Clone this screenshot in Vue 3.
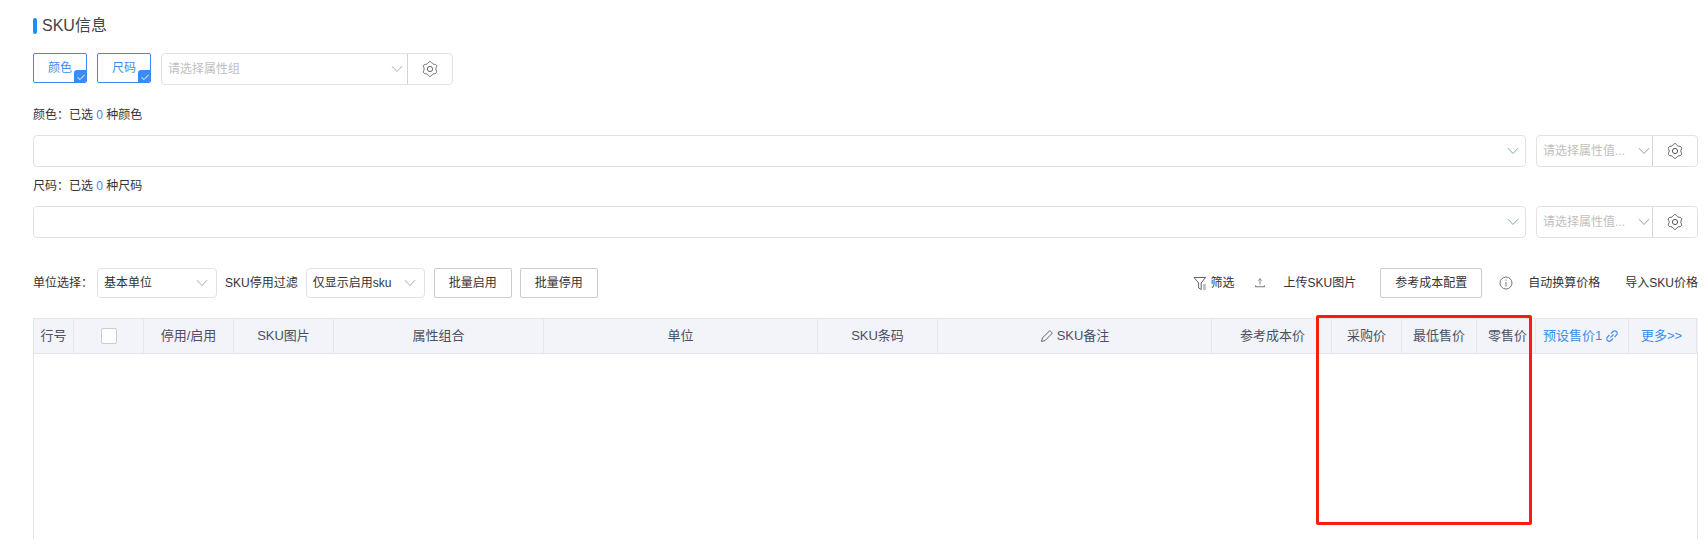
<script setup>
const cols = [
  { t: '行号', w: 40 },
  { t: '', w: 70, check: true },
  { t: '停用/启用', w: 90 },
  { t: 'SKU图片', w: 100 },
  { t: '属性组合', w: 210 },
  { t: '单位', w: 274 },
  { t: 'SKU条码', w: 120 },
  { t: 'SKU备注', w: 274, pen: true },
  { t: '参考成本价', w: 120, cls: 'r27' },
  { t: '采购价', w: 70, cls: 'r15' },
  { t: '最低售价', w: 75, cls: 'r11' },
  { t: '零售价', w: 59, cls: 'r6' },
  { t: '预设售价1', w: 93, cls: 'link pad2', chain: true },
  { t: '更多>>', w: 68, cls: 'link pad2' },
]
const gridCols = cols.map(c => c.w + 'px').join(' ')

function gearPath() {
  const pts = []
  for (let i = 0; i < 72; i++) {
    const a = (i / 72) * Math.PI * 2
    const r = 6.6 - 0.8 * Math.cos(6 * a)
    pts.push((8 + r * Math.cos(a)).toFixed(2) + ' ' + (8 + r * Math.sin(a)).toFixed(2))
  }
  return 'M' + pts.join('L') + 'Z'
}
const gear = gearPath()
const attrRows = [
  { label: '颜色', unit: '种颜色' },
  { label: '尺码', unit: '种尺码' },
]
</script>

<template>
  <div class="page">
    <div class="title"><span class="bar"></span>SKU信息</div>

    <div class="attr-bar">
      <div class="tag">颜色<span class="corner"><svg viewBox="0 0 12 12" width="12" height="12"><path d="M2.5 6.2 5 8.6 9.6 3.8" fill="none" stroke="#fff" stroke-width="1"/></svg></span></div>
      <div class="tag">尺码<span class="corner"><svg viewBox="0 0 12 12" width="12" height="12"><path d="M2.5 6.2 5 8.6 9.6 3.8" fill="none" stroke="#fff" stroke-width="1"/></svg></span></div>
      <div class="combo group-combo">
        <span class="ph grow">请选择属性组</span>
        <svg class="chev" viewBox="0 0 12 8" width="12" height="8"><path d="M1 1.2 6 6.5 11 1.2" fill="none" stroke="#a9adb3" stroke-width="1"/></svg>
        <span class="gear-cell"><svg viewBox="0 0 16 16" width="16" height="16"><path :d="gear" fill="none" stroke="#666" stroke-width="1"/><circle cx="8" cy="8" r="2.6" fill="none" stroke="#666" stroke-width="1"/></svg></span>
      </div>
    </div>

    <template v-for="row in attrRows" :key="row.label">
      <div class="sel-label">{{ row.label }}：已选 <b>0</b> {{ row.unit }}</div>
      <div class="sel-row">
        <div class="combo wide">
          <svg class="chev" viewBox="0 0 12 8" width="12" height="8"><path d="M1 1.2 6 6.5 11 1.2" fill="none" stroke="#7fae9c" stroke-width="1"/></svg>
        </div>
        <div class="combo value-combo">
          <span class="ph grow">请选择属性值...</span>
          <svg class="chev" viewBox="0 0 12 8" width="12" height="8"><path d="M1 1.2 6 6.5 11 1.2" fill="none" stroke="#8ea0b5" stroke-width="1"/></svg>
          <span class="gear-cell"><svg viewBox="0 0 16 16" width="16" height="16"><path :d="gear" fill="none" stroke="#555" stroke-width="1"/><circle cx="8" cy="8" r="2.6" fill="none" stroke="#555" stroke-width="1"/></svg></span>
        </div>
      </div>
    </template>

    <div class="toolbar">
      <div class="tb-left">
        <span>单位选择：</span>
        <div class="combo tb-select s1"><span class="grow">基本单位</span><svg class="chev" viewBox="0 0 12 8" width="12" height="8"><path d="M1 1.2 6 6.5 11 1.2" fill="none" stroke="#a9adb3" stroke-width="1"/></svg></div>
        <span class="lbl2">SKU停用过滤</span>
        <div class="combo tb-select s2"><span class="grow">仅显示启用sku</span><svg class="chev" viewBox="0 0 12 8" width="12" height="8"><path d="M1 1.2 6 6.5 11 1.2" fill="none" stroke="#a9adb3" stroke-width="1"/></svg></div>
        <button class="btn b1">批量启用</button>
        <button class="btn b2">批量停用</button>
      </div>
      <div class="tb-right">
        <span class="act a1"><svg viewBox="0 0 14 15" width="14" height="15"><path d="M1 1.5H12.5L8.2 7V13.5L5.6 12V7Z" fill="none" stroke="#666" stroke-width="1"/><path d="M10 9h3M10 11h3M10 13h3" stroke="#888" stroke-width="1"/></svg><span>筛选</span></span>
        <span class="act a2"><svg viewBox="0 0 14 14" width="12" height="12"><path d="M7 2V9M4.8 4.4 7 2l2.2 2.4" fill="none" stroke="#777" stroke-width="1"/><path d="M2 9.5V11.5H12V9.5" fill="none" stroke="#777" stroke-width="1.2"/></svg><span class="up">上传SKU图片</span></span>
        <button class="btn b3">参考成本配置</button>
        <svg class="info" viewBox="0 0 14 14" width="14" height="14"><circle cx="7" cy="7" r="6" fill="none" stroke="#777" stroke-width="1"/><path d="M7 6V10.5M7 3.6V4.8" stroke="#777" stroke-width="1"/></svg>
        <span class="auto">自动换算价格</span>
        <span class="imp">导入SKU价格</span>
      </div>
    </div>

    <div class="table">
      <div class="thead" :style="{ gridTemplateColumns: gridCols }">
        <div v-for="(c, i) in cols" :key="i" class="th" :class="c.cls">
          <span v-if="c.check" class="check"></span>
          <svg v-if="c.pen" class="pen" viewBox="0 0 14 14" width="14" height="14"><path d="M1.5 12.5 2.4 9 9.8 1.6l2.6 2.6-7.4 7.4Z" fill="none" stroke="#666" stroke-width="1"/></svg>
          <span v-if="c.t">{{ c.t }}</span>
          <svg v-if="c.chain" class="chain" viewBox="0 0 14 14" width="14" height="14"><path d="M5.5 8.5 8.5 5.5M6 4.5 8 2.5a2.4 2.4 0 0 1 3.5 3.5L9.5 8M8 9.5 6 11.5A2.4 2.4 0 0 1 2.5 8L4.5 6" fill="none" stroke="#4a90f0" stroke-width="1.2"/></svg>
        </div>
      </div>
      <div class="redbox"></div>
    </div>
  </div>
</template>

<style>
html, body { margin: 0; background: #fff; overflow: hidden; }
</style>

<style scoped>
.page {
  height: 539px;
  box-sizing: border-box;
  padding: 16px 8px 0 33px;
  font: 12px/16px "Liberation Sans", "Noto Sans CJK SC", sans-serif;
  color: #333;
  display: flex;
  flex-direction: column;
  overflow: hidden;
}
.title { display: flex; align-items: center; font-size: 16px; line-height: 20px; color: #444; }
.bar { width: 4px; height: 16px; border-radius: 2px; background: #1890ff; margin-right: 5px; }

.attr-bar { display: flex; gap: 10px; margin-top: 17px; align-items: flex-start; }
.tag {
  position: relative;
  width: 54px; height: 30px; box-sizing: border-box;
  border: 1px solid #3a8cf5; border-radius: 2px;
  color: #3f8cf0; text-align: center; line-height: 28px;
  overflow: hidden;
}
.corner { position: absolute; right: -1px; bottom: -1px; width: 13px; height: 13px; background: #3a8cf5; border-top-left-radius: 3px; display: flex; align-items: center; justify-content: center; }

.combo {
  box-sizing: border-box; display: flex; align-items: center;
  border: 1px solid #e2e2e2; border-radius: 4px; background: #fff; height: 32px;
}
.grow { flex: 1; min-width: 0; white-space: nowrap; }
.ph { color: #c0c0c0; }
.chev { flex: none; }
.gear-cell { flex: none; display: flex; align-items: center; justify-content: center; height: 100%; border-left: 1px solid #d4d4d4; }
.group-combo { width: 292px; padding-left: 6px; }
.group-combo .chev { margin-right: 4px; }
.group-combo .gear-cell { width: 44px; }

.sel-label { margin-top: 20px; height: 20px; line-height: 20px; }
.sel-label b { font-weight: 400; color: #3f8cf0; }
.sel-row + .sel-label { margin-top: 9px; }
.sel-row { display: flex; gap: 10px; margin-top: 10px; }
.wide { width: 1493px; justify-content: flex-end; padding-right: 6px; }
.value-combo { width: 162px; padding-left: 6px; }
.value-combo .chev { margin-right: 2px; }
.value-combo .gear-cell { width: 44px; }

.toolbar { display: flex; justify-content: space-between; margin-top: 30px; height: 30px; align-items: center; }
.tb-left, .tb-right { display: flex; align-items: center; height: 100%; white-space: nowrap; }
.tb-select { height: 30px; padding: 0 8px 0 6px; }
.s1 { width: 120px; margin-left: 4px; }
.s2 { width: 119px; margin-left: 8px; }
.lbl2 { margin-left: 8px; }
.btn {
  box-sizing: border-box; height: 30px; padding: 0; font: inherit; color: #333;
  background: #fff; border: 1px solid #ccc; border-radius: 2px;
}
.b1 { width: 78px; margin-left: 9px; }
.b2 { width: 78px; margin-left: 8px; }
.b3 { width: 102px; margin-left: 24px; }
.act { display: flex; align-items: center; gap: 4px; }
.a2 { margin-left: 19px; gap: 18px; }
.info { margin-left: 17px; }
.auto { margin-left: 15px; }
.imp { margin-left: 25px; }

.table {
  position: relative; flex: 1; width: 1665px; box-sizing: border-box;
  margin-top: 20px;
  border-left: 1px solid #e4e4e4; border-right: 1px solid #e4e4e4;
}
.thead {
  display: grid; height: 36px; box-sizing: border-box; margin-right: -1px;
  background: #f2f4f9; border-top: 1px solid #e4e6ec; border-bottom: 1px solid #e4e6ec;
  overflow: hidden;
}
.th {
  display: flex; align-items: center; justify-content: center; gap: 3px;
  border-right: 1px solid #e4e6ec; color: #4e4f63; font-size: 13px; white-space: nowrap;
  min-width: 0;
}
.r27, .r15, .r11, .r6 { justify-content: flex-end; }
.r27 { padding-right: 26px; }
.r15 { padding-right: 15px; }
.r11 { padding-right: 11px; }
.r6 { padding-right: 8px; }
.th.pad2 { padding-right: 2px; }
.th.link { color: #3f8cf0; }
.check { width: 16px; height: 16px; box-sizing: border-box; border: 1px solid #ccc; border-radius: 2px; background: #fff; }
.redbox {
  position: absolute; left: 1282px; top: -3px; width: 216px; height: 210px; box-sizing: border-box;
  border: 3px solid #fb1c10; border-radius: 2px; pointer-events: none;
}
</style>
